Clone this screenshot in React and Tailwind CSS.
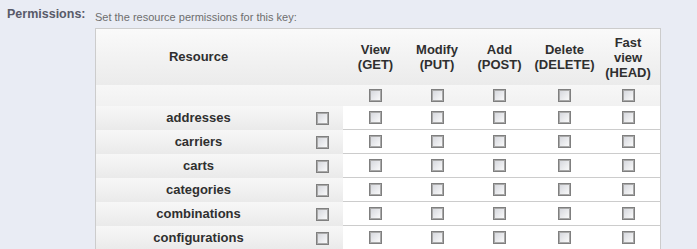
import React from 'react';

const methods = [
    { key: 'view', lines: ['View', '(GET)'] },
    { key: 'modify', lines: ['Modify', '(PUT)'] },
    { key: 'add', lines: ['Add', '(POST)'] },
    { key: 'delete', lines: ['Delete', '(DELETE)'] },
    { key: 'head', lines: ['Fast', 'view', '(HEAD)'] },
];

const resources = ['addresses', 'carriers', 'carts', 'categories', 'combinations', 'configurations'];

const cols = 'grid grid-cols-[205px_42px_65px_58px_67px_63px_64px]';

const Box = () => (
    <span className="block w-[13px] h-[13px] border border-[#7f7f7f] shadow-[inset_0_0_0_1px_#a9a9a9] bg-linear-to-br from-[#d3d5db] to-[#fdfdfd]" />
);

const App = () => {
    return (
        <div className="w-[697px] h-[249px] overflow-hidden bg-[#e9ecf4] font-['Liberation_Sans',Arial,sans-serif]">
            <div className="flex pt-[7px]">
                {/* Label */}
                <div className="w-[95px] pl-[7px] text-[12.5px] leading-[14px] font-bold text-[#585a69]">
                    Permissions:
                </div>

                <div className="flex flex-col">
                    <p className="text-[11px] leading-[14px] mt-[3px] text-[#6e6e6e]">
                        Set the resource permissions for this key:
                    </p>

                    {/* Table */}
                    <div className="mt-[4px] w-[566px] border border-b-0 border-[#cccccc] text-[13px] text-[#2f2f2f] font-bold">
                        {/* Header */}
                        <div className={`${cols} h-[56px] bg-linear-to-b from-[#fafafa] to-[#ebebeb]`}>
                            <div className="flex items-center justify-center">Resource</div>
                            <div />
                            {methods.map((m) => (
                                <div key={m.key} className="flex flex-col items-center justify-center leading-[15px] text-center">
                                    {m.lines.map((l) => (
                                        <span key={l}>{l}</span>
                                    ))}
                                </div>
                            ))}
                        </div>

                        {/* Select-all row */}
                        <div className={`${cols} h-[21px] bg-linear-to-b from-[#f7f7f7] to-[#f1f1f1]`}>
                            <div />
                            <div />
                            {methods.map((m) => (
                                <div key={m.key} className="flex items-center justify-center">
                                    <Box />
                                </div>
                            ))}
                        </div>

                        {/* Rows */}
                        {resources.map((r) => (
                            <div key={r} className={`${cols} h-[24px]`}>
                                <div className="flex items-center justify-center bg-linear-to-b from-[#f7f7f7] to-[#eaeaea]">
                                    {r}
                                </div>
                                <div className="flex items-center justify-center bg-linear-to-b from-[#f7f7f7] to-[#eaeaea]">
                                    <Box />
                                </div>
                                {methods.map((m) => (
                                    <div key={m.key} className="flex items-center justify-center bg-white border-b border-[#cccccc]">
                                        <Box />
                                    </div>
                                ))}
                            </div>
                        ))}
                    </div>
                </div>
            </div>
        </div>
    );
};

export default App;
